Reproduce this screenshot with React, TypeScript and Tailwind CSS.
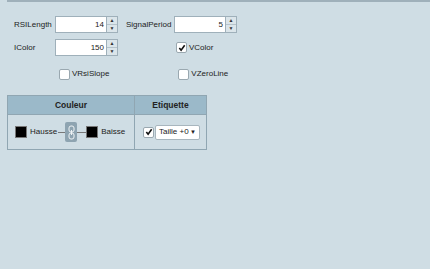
import React from "react";

const Spin = ({ value }: { value: string }) => (
  <div className="flex h-[17px] w-[63px] border border-[#9fb0ba] bg-white">
    <div className="flex-1 pr-[2px] text-right leading-[15px]">{value}</div>
    <div className="flex w-[11px] flex-col border-l border-[#9fb0ba] bg-[#dbe5ea]">
      <div className="flex flex-1 items-center justify-center border-b border-[#b5c3cb] text-[5px] leading-none text-[#333]">▲</div>
      <div className="flex flex-1 items-center justify-center text-[5px] leading-none text-[#333]">▼</div>
    </div>
  </div>
);

const Check = ({ checked }: { checked?: boolean }) => (
  <div className="flex h-[11px] w-[11px] items-center justify-center rounded-[2px] border border-[#9aa8b0] bg-white">
    {checked && (
      <svg width="8" height="8" viewBox="0 0 9 9">
        <path d="M1.5 4.5 L3.5 7 L7.5 1.5" fill="none" stroke="#111" strokeWidth="1.8" />
      </svg>
    )}
  </div>
);

export default function App() {
  return (
    <div className="h-[269px] w-[430px] bg-[#cfdde4] text-[8px] text-[#222]" style={{ fontFamily: "'Liberation Sans', Arial, sans-serif" }}>
      <div className="ml-[7px] h-[2px] bg-[#9fb0ba]" />
      <div className="pl-[14px] pt-[14px]">
        <div className="flex items-center">
          <span className="w-[41px]">RSILength</span>
          <Spin value="14" />
          <span className="ml-[8px] w-[48px]">SignalPeriod</span>
          <Spin value="5" />
        </div>
        <div className="mt-[6px] flex items-center">
          <span className="w-[41px]">IColor</span>
          <Spin value="150" />
          <div className="ml-[58px] flex items-center gap-[2px]">
            <Check checked />
            <span>VColor</span>
          </div>
        </div>
        <div className="mt-[12px] flex items-center">
          <div className="ml-[45px] flex items-center gap-[2px]">
            <Check />
            <span>VRsiSlope</span>
          </div>
          <div className="ml-[69px] flex items-center gap-[2px]">
            <Check />
            <span>VZeroLine</span>
          </div>
        </div>
      </div>
      <div className="ml-[7px] mt-[15px] w-[200px] border border-[#90a6b2]">
        <div className="flex h-[18px] bg-[#9bb9c9] text-[8.5px] font-bold">
          <div className="flex w-[127px] items-center justify-center border-r border-[#90a6b2]">Couleur</div>
          <div className="flex flex-1 items-center justify-center">Etiquette</div>
        </div>
        <div className="flex h-[35px] border-t border-[#90a6b2]">
          <div className="flex w-[127px] items-center border-r border-[#90a6b2] pl-[7px]">
            <div className="h-[12px] w-[12px] border border-[#777] bg-black" />
            <span className="ml-[3px]">Hausse</span>
            <div className="ml-[1px] h-px w-[7px] bg-[#777]" />
            <div className="flex h-[20px] w-[12px] items-center justify-center rounded-[2px] bg-[#8ea4b1]">
              <svg width="7" height="15" viewBox="0 0 7 15">
                <rect x="1" y="1" width="5" height="6" rx="2" fill="none" stroke="#eef3f5" strokeWidth="1" />
                <rect x="1" y="8" width="5" height="6" rx="2" fill="none" stroke="#eef3f5" strokeWidth="1" />
                <line x1="3.5" y1="5" x2="3.5" y2="10" stroke="#eef3f5" strokeWidth="1" />
              </svg>
            </div>
            <div className="h-px w-[9px] bg-[#777]" />
            <div className="h-[12px] w-[12px] border border-[#777] bg-black" />
            <span className="ml-[3px]">Baisse</span>
          </div>
          <div className="flex flex-1 items-center pl-[8px]">
            <Check checked />
            <div className="ml-[1px] flex h-[15px] w-[45px] items-center justify-between rounded-[2px] border border-[#a8b6be] bg-white px-[3px]">
              <span>Taille +0</span>
              <span className="text-[6px]">▼</span>
            </div>
          </div>
        </div>
      </div>
    </div>
  );
}
